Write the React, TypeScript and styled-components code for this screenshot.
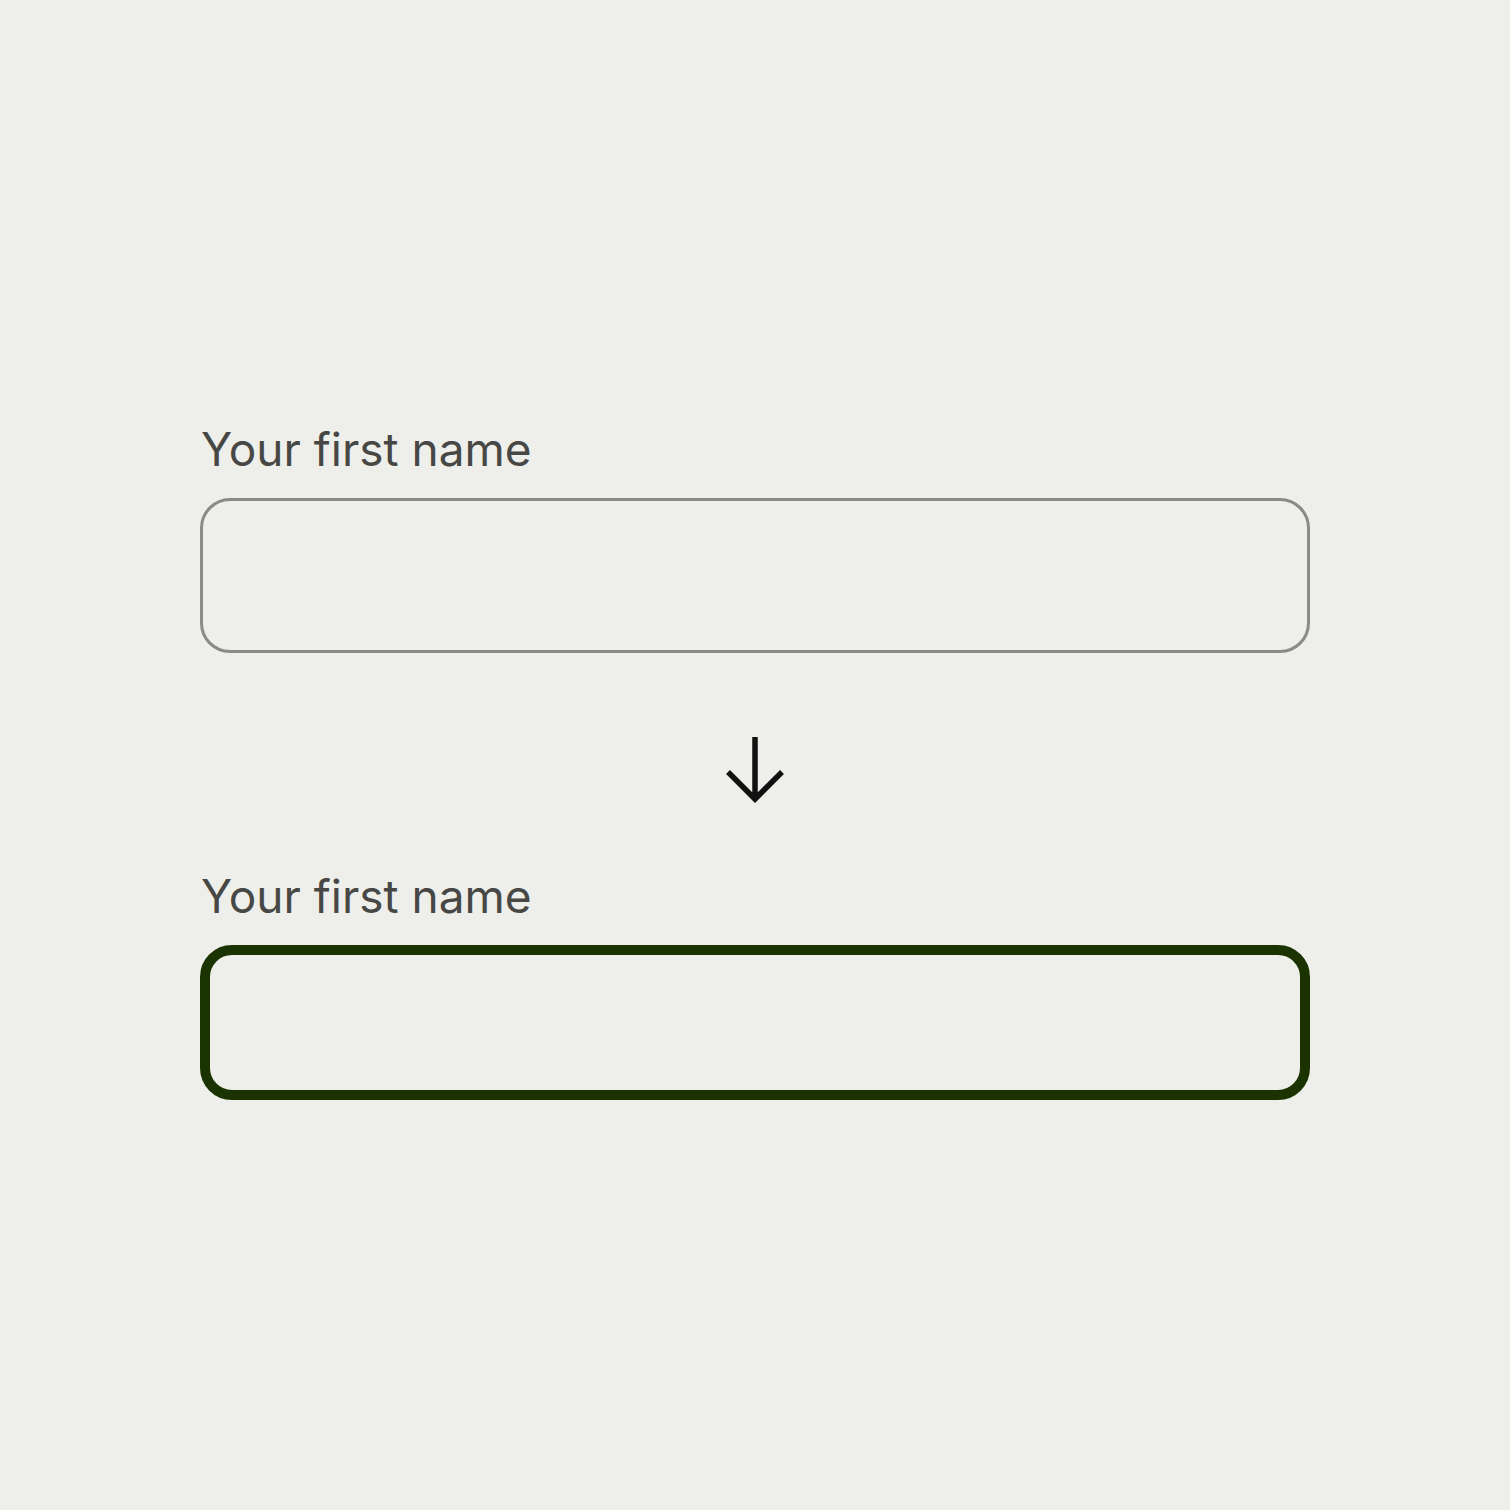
import React from 'react'
import styled, { createGlobalStyle } from 'styled-components'

const GlobalStyle = createGlobalStyle`
  html, body {
    margin: 0;
    padding: 0;
    background: #eeefea;
  }
  body {
    font-family: Inter, "Noto Sans", sans-serif;
  }
`

const Page = styled.main`
  min-height: 1510px;
  box-sizing: border-box;
  padding: 421px 200px 0;
  display: flex;
  flex-direction: column;
`

const Field = styled.label`
  display: flex;
  flex-direction: column;
  gap: 21px;
`

const LabelText = styled.span`
  font-size: 46px;
  line-height: 56px;
  color: #474845;
  padding-left: 1px;
`

const Input = styled.input<{ $focused?: boolean }>`
  box-sizing: border-box;
  width: 1110px;
  height: 155px;
  margin: 0;
  background: transparent;
  font: inherit;
  outline: none;
  border-radius: ${p => (p.$focused ? '32px' : '30px')};
  border: ${p => (p.$focused ? '10px solid #1b3300' : '3px solid #8a8b87')};
`

const ArrowRow = styled.div`
  display: flex;
  justify-content: center;
  padding: 84px 0 61px;
`

const DownArrow = () => (
  <svg width="60" height="70" viewBox="0 0 60 70" fill="none">
    <path
      d="M30 0v62M3 35l27 27 27-27"
      stroke="#111"
      strokeWidth="5.5"
      strokeLinecap="butt"
      strokeLinejoin="miter"
    />
  </svg>
)

export default function App() {
  return (
    <>
      <GlobalStyle />
      <Page>
        <Field>
          <LabelText>Your first name</LabelText>
          <Input type="text" />
        </Field>
        <ArrowRow>
          <DownArrow />
        </ArrowRow>
        <Field>
          <LabelText>Your first name</LabelText>
          <Input type="text" $focused />
        </Field>
      </Page>
    </>
  )
}
